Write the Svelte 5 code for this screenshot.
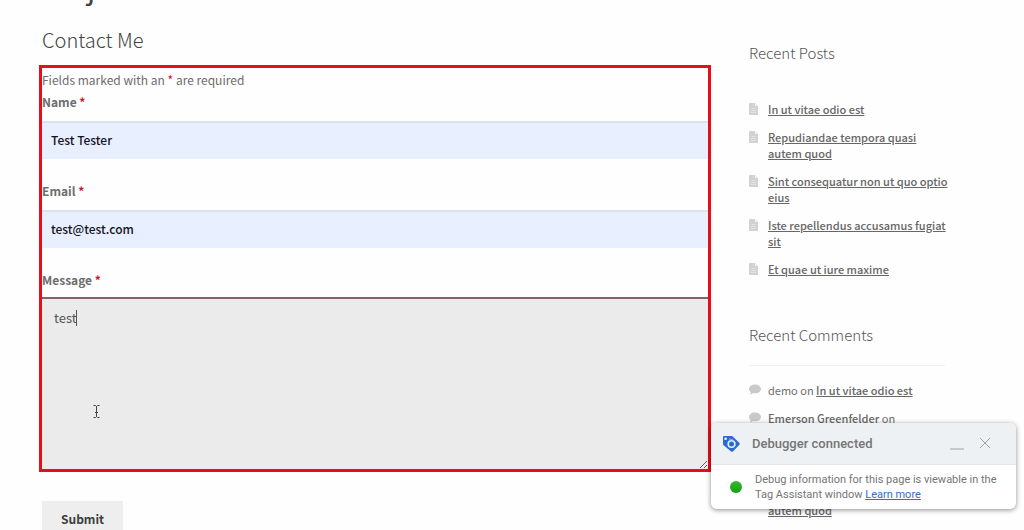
<script>
	let name = $state('Test Tester');
	let email = $state('test@test.com');
	let message = $state('test');
	let debuggerOpen = $state(true);

	const posts = [
		'In ut vitae odio est',
		'Repudiandae tempora quasi autem quod',
		'Sint consequatur non ut quo optio eius',
		'Iste repellendus accusamus fugiat sit',
		'Et quae ut iure maxime'
	];

	const comments = [
		{ author: 'demo', post: posts[0] },
		{ author: 'Emerson Greenfelder', post: posts[1], link: true },
		{ author: 'Emerson Greenfelder', post: posts[1], link: true }
	];
</script>

<div class="page">
	<main>
		<h1>j</h1>
		<h2>Contact Me</h2>

		<form id="contact" onsubmit={(e) => e.preventDefault()}>
			<p class="intro">Fields marked with an <span class="req">*</span> are required</p>

			<div class="field">
				<label for="name">Name <span class="req">*</span></label>
				<input id="name" type="text" bind:value={name} />
			</div>

			<div class="field">
				<label for="email">Email <span class="req">*</span></label>
				<input id="email" type="email" bind:value={email} />
			</div>

			<div class="field message">
				<label for="message">Message <span class="req">*</span></label>
				<textarea id="message" bind:value={message}></textarea>
				<span class="caret"></span>
				<svg class="ibeam" viewBox="0 0 9 15" width="9" height="15" aria-hidden="true">
					<path d="M1.5 1.5h2l1 1 1-1h2M4.5 2v11M1.5 13.5h2l1-1 1 1h2M3 8.5h3" />
				</svg>
			</div>
		</form>

		<button class="submit" type="submit" form="contact">Submit</button>
	</main>

	<aside>
		<section>
			<h3>Recent Posts</h3>
			<ul>
				{#each posts as post}
					<li>
						<svg class="file" viewBox="0 0 9 12" width="9" height="12" aria-hidden="true">
							<path d="M0 0h6l3 3v9H0z" fill="#d2d2d2" />
							<path d="M6 0v3h3" fill="#f0f0f0" />
							<path d="M2 9.5h5M2 7.5h5M3 5.5h3" stroke="#e4e4e4" />
						</svg>
						<a href="#post">{post}</a>
					</li>
				{/each}
			</ul>
		</section>

		<section class="comments">
			<h3>Recent Comments</h3>
			<ul>
				{#each comments as comment}
					<li>
						<svg class="bubble" viewBox="0 0 12 11" width="12" height="11" aria-hidden="true">
							<path
								d="M6 .5c3.300 0 6 1.900 6 4.400s-2.700 4.400-6 4.400c-.7 0-1.300-.1-1.900-.2C3.200 9.900 2 10.500.8 10.600c.6-.7 1-1.500 1-2.400C.7 7.400 0 6.200 0 4.900 0 2.400 2.700.5 6 .5z"
							/>
						</svg>
						<span>
							{#if comment.link}<b>{comment.author}</b>{:else}{comment.author}{/if} on
							<a href="#comment">{comment.post}</a>
						</span>
					</li>
				{/each}
			</ul>
		</section>
	</aside>

	{#if debuggerOpen}
		<div class="debugger" role="status">
			<header>
				<svg class="tag" viewBox="0 0 18 18" width="18" height="18" aria-hidden="true">
					<path
						d="M2 1h7.500c.5 0 1 .2 1.300.5l6.400 6.200c.7.7.7 1.600 0 2.300l-6.100 6.300c-.7.7-1.600.7-2.200 0L1.600 10.200C1.200 9.800 1 9.400 1 8.900V2c0-.6.4-1 1-1z"
						fill="#2b6cd4"
					/>
					<circle cx="3.600" cy="3.800" r="1.200" fill="#fff" />
					<circle cx="9.500" cy="9" r="3.300" fill="#2b6cd4" stroke="#e4eefd" stroke-width="1.600" />
					<path d="M7 3.800l4.500 1.400M13.500 7v4" stroke="#8fb6f2" />
				</svg>
				<strong>Debugger connected</strong>
				<button type="button" aria-label="Minimize">
					<svg viewBox="0 0 14 14" width="14" height="14"><path d="M0 12h14" /></svg>
				</button>
				<button type="button" aria-label="Close" onclick={() => (debuggerOpen = false)}>
					<svg viewBox="0 0 14 14" width="14" height="14"><path d="M2 1l10 10M12 1L2 11" /></svg>
				</button>
			</header>
			<div class="debugger-body">
				<span class="dot"></span>
				<p>
					Debug information for this page is viewable in the Tag Assistant window
					<a href="#learn">Learn more</a>
				</p>
			</div>
		</div>
	{/if}
</div>

<style>
	:global(body) {
		background: #fefefe;
	}

	.page {
		position: relative;
		box-sizing: border-box;
		display: flex;
		gap: 38px;
		height: 100vh;
		padding: 0 75px 0 39px;
		overflow: hidden;
		font-family: 'Noto Sans CJK SC', 'Open Sans', sans-serif;
		font-size: 12px;
		color: #6d6d6d;
	}

	main {
		flex: 1;
		min-width: 0;
	}

	h1,
	h2,
	h3,
	p,
	ul {
		margin: 0;
		padding: 0;
	}

	h1 {
		height: 24px;
		padding-left: 48px;
		font-size: 30px;
		line-height: 0;
		margin-top: -14px;
		font-weight: 400;
		color: #444;
	}

	h2 {
		margin: 14px 0 9px 3px;
		font-size: 20px;
		font-weight: 300;
		line-height: 32px;
		color: #444;
	}

	form {
		border: 3px solid #ea0c1b;
		padding-top: 1px;
	}

	.intro,
	label {
		display: block;
		line-height: 22px;
	}

	label {
		font-weight: 700;
		margin-bottom: 8px;
	}

	.req {
		color: #d0112b;
	}

	.field {
		margin-bottom: 21px;
	}

	input,
	textarea {
		box-sizing: border-box;
		display: block;
		width: 100%;
		margin: 0;
		border: 0;
		border-radius: 0;
		outline: none;
		font: inherit;
	}

	input {
		height: 38px;
		padding: 0 9px 4px;
		border-top: 2px solid #dbe2ee;
		background: #e8effe;
		color: #14141f;
		font-weight: 500;
	}

	.message {
		position: relative;
		margin-bottom: 0;
	}

	.message label {
		margin-bottom: 6px;
	}

	textarea {
		height: 172px;
		padding: 9px 12px;
		border-top: 2px solid #87606c;
		background: #ebebeb;
		color: #555;
		font-size: 13px;
		line-height: 20px;
		resize: vertical;
	}

	.caret {
		position: absolute;
		left: 34px;
		top: 41px;
		width: 1px;
		height: 16px;
		background: #555;
	}

	.ibeam {
		position: absolute;
		left: 50px;
		top: 135px;
		fill: none;
		stroke: #444;
	}

	.submit {
		margin: 29px 0 0 3px;
		padding: 0 19px 4px;
		height: 38px;
		border: 0;
		background: #eee;
		color: #3c3c3c;
		font: inherit;
		font-weight: 700;
	}

	aside {
		width: 200px;
		padding-top: 39px;
		font-size: 11px;
		line-height: 16px;
	}

	h3 {
		margin-bottom: 34px;
		font-size: 15px;
		font-weight: 300;
		line-height: 28px;
		color: #555;
	}

	ul {
		display: grid;
		gap: 12px;
		list-style: none;
	}

	li {
		display: flex;
	}

	li svg {
		flex: none;
		margin-top: 2px;
	}

	.file {
		margin-right: 10px;
	}

	.bubble {
		margin-right: 7px;
		fill: #c9c9c9;
	}

	aside a,
	aside b {
		color: #666;
		font-weight: 500;
	}

	.comments {
		margin: 44px 4px 0 0;
	}

	.comments h3 {
		margin-bottom: 16px;
	}

	.comments ul {
		padding-top: 16px;
		border-top: 1px solid #f0f0f0;
	}

	.debugger {
		position: absolute;
		right: 8px;
		bottom: 21px;
		width: 305px;
		border-radius: 6px;
		overflow: hidden;
		background: #fff;
		box-shadow: 0 1px 5px rgba(0, 0, 0, 0.45);
		font-family: Roboto, sans-serif;
		color: #757575;
	}

	.debugger header {
		display: flex;
		align-items: center;
		height: 41px;
		padding: 0 24px 0 11px;
		background: #eef1f4;
		border-bottom: 1px solid #e4e7ea;
	}

	.debugger strong {
		flex: 1;
		margin-left: 12px;
		font-size: 13px;
		font-weight: 500;
	}

	.debugger button {
		display: flex;
		margin-left: 14px;
		padding: 0;
		border: 0;
		background: none;
	}

	.debugger button svg {
		fill: none;
		stroke: #a0a3a6;
	}

	.debugger-body {
		display: flex;
		align-items: center;
		gap: 13px;
		height: 44px;
		padding: 0 12px 0 19px;
	}

	.dot {
		flex: none;
		width: 12px;
		height: 12px;
		border-radius: 50%;
		background: linear-gradient(#3cb532, #0ba60b);
	}

	.debugger p {
		font-size: 11px;
		line-height: 15px;
	}

	.debugger a {
		color: #2f6fc4;
	}
</style>
